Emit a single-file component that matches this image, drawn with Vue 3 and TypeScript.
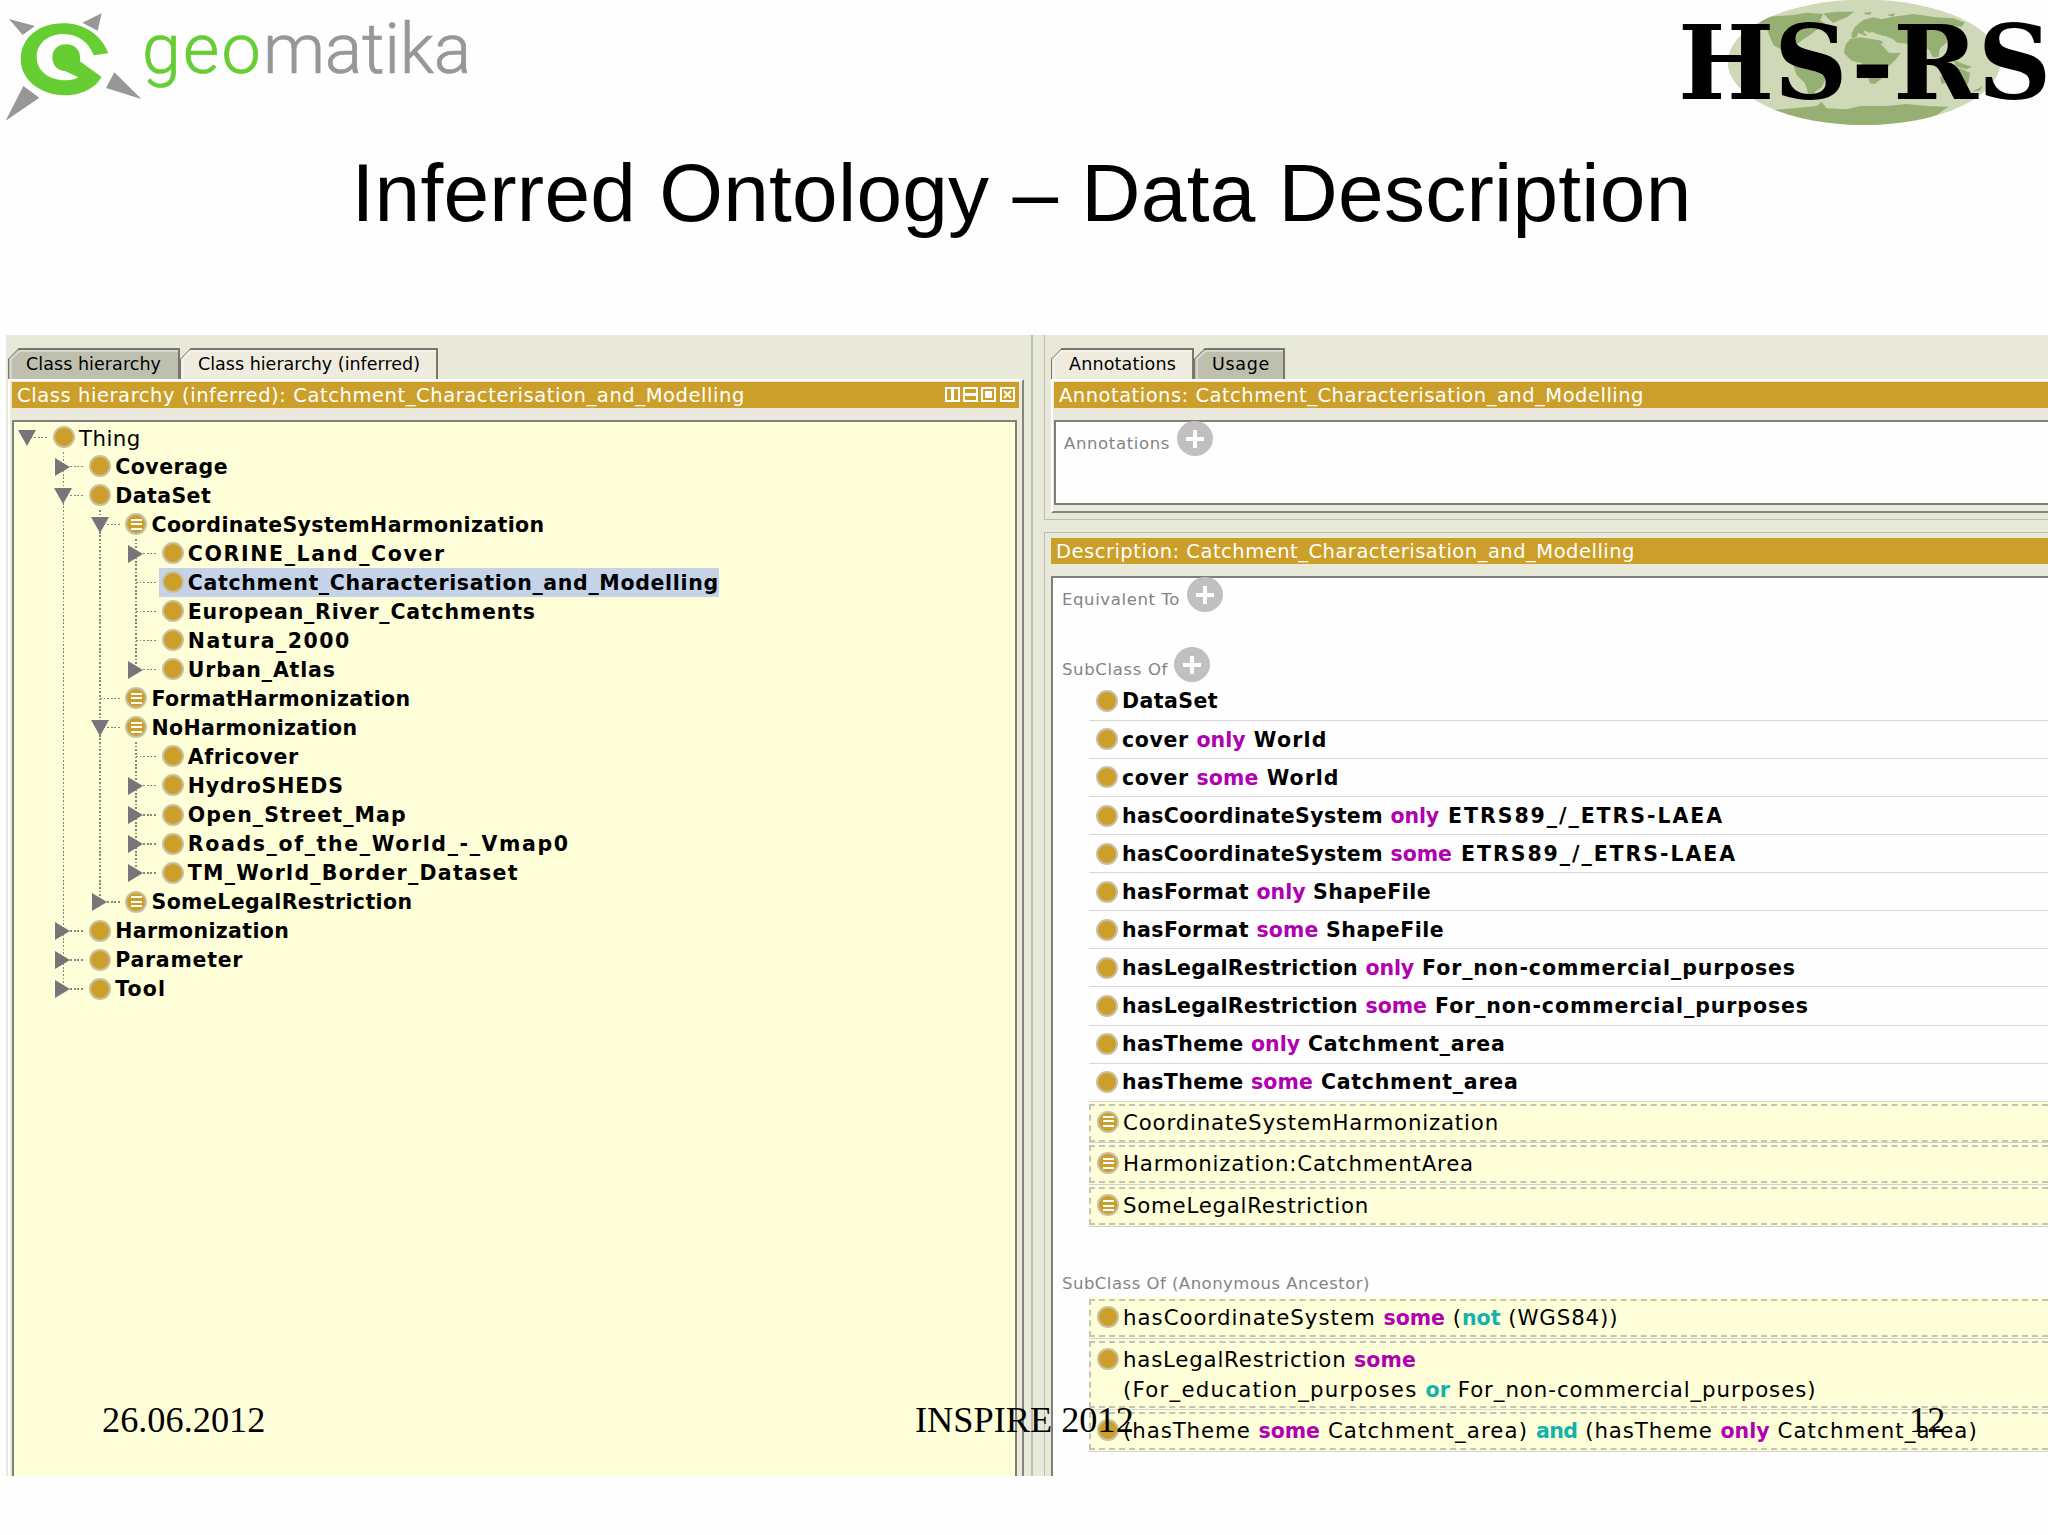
<script setup lang="ts">
import type { Directive } from 'vue'

type Kind = 'plain' | 'defined'
type Expander = 'open' | 'closed' | 'none'

interface TreeNode {
  label: string
  level: number
  kind: Kind
  expander: Expander
  width: number
  selected?: boolean
}

interface Token {
  text: string
  width: number
  tone?: 'quantifier' | 'operator'
}

interface Axiom {
  kind: Kind
  lines: Token[][]
}

interface Tab {
  label: string
  width: number
  textWidth: number
  active: boolean
}

// Spreads the letters of a text so that it takes the given width.
const vFit: Directive<HTMLElement, number> = {
  mounted(el, binding) {
    const count = (el.textContent ?? '').length
    const natural = el.getBoundingClientRect().width
    if (count > 0) el.style.letterSpacing = `${(binding.value - natural) / count}px`
  },
}

const node = (
  level: number,
  label: string,
  expander: Expander,
  width: number,
  kind: Kind = 'plain',
  selected = false,
): TreeNode => ({ level, label, expander, width, kind, selected })

const nodes: TreeNode[] = [
  node(0, 'Thing', 'open', 62),
  node(1, 'Coverage', 'closed', 113),
  node(1, 'DataSet', 'open', 96),
  node(2, 'CoordinateSystemHarmonization', 'open', 393, 'defined'),
  node(3, 'CORINE_Land_Cover', 'closed', 258),
  node(3, 'Catchment_Characterisation_and_Modelling', 'none', 531, 'plain', true),
  node(3, 'European_River_Catchments', 'none', 348),
  node(3, 'Natura_2000', 'none', 163),
  node(3, 'Urban_Atlas', 'closed', 148),
  node(2, 'FormatHarmonization', 'none', 259, 'defined'),
  node(2, 'NoHarmonization', 'open', 206, 'defined'),
  node(3, 'Africover', 'none', 111),
  node(3, 'HydroSHEDS', 'closed', 156),
  node(3, 'Open_Street_Map', 'closed', 219),
  node(3, 'Roads_of_the_World_-_Vmap0', 'closed', 382),
  node(3, 'TM_World_Border_Dataset', 'closed', 331),
  node(2, 'SomeLegalRestriction', 'closed', 261, 'defined'),
  node(1, 'Harmonization', 'closed', 174),
  node(1, 'Parameter', 'closed', 128),
  node(1, 'Tool', 'closed', 51),
]

// Vertical guide of one indent column: full height, upper half, or none.
function guide(row: number, column: number): string {
  if (column === 0) return 'guide-none'
  let continues = false
  for (let i = row + 1; i < nodes.length; i++) {
    if (nodes[i].level < column) break
    if (nodes[i].level === column) {
      continues = true
      break
    }
  }
  if (continues) return 'guide-full'
  return nodes[row].level === column ? 'guide-half' : 'guide-none'
}

// "*word*" marks a quantifier and "~word~" a boolean operator.
function parse(source: string, widths: number[]): Token[] {
  return source
    .split(/(\*[^*]+\*|~[^~]+~)/)
    .filter((part) => part.length > 0)
    .map((part, i) => {
      const width = widths[i]
      if (part.startsWith('*')) return { text: part.slice(1, -1), width, tone: 'quantifier' as const }
      if (part.startsWith('~')) return { text: part.slice(1, -1), width, tone: 'operator' as const }
      return { text: part, width }
    })
}

const axiom = (kind: Kind, ...lines: [string, number[]][]): Axiom => ({
  kind,
  lines: lines.map(([source, widths]) => parse(source, widths)),
})

const asserted: Axiom[] = [
  axiom('plain', ['DataSet', [96]]),
  axiom('plain', ['cover *only* World', [74.5, 49, 82]]),
  axiom('plain', ['cover *some* World', [74.5, 62, 81]]),
  axiom('plain', ['hasCoordinateSystem *only* ETRS89_/_ETRS-LAEA', [268.5, 48.5, 285]]),
  axiom('plain', ['hasCoordinateSystem *some* ETRS89_/_ETRS-LAEA', [268.5, 61.5, 285]]),
  axiom('plain', ['hasFormat *only* ShapeFile', [134.5, 49, 125.5]]),
  axiom('plain', ['hasFormat *some* ShapeFile', [134.5, 62, 125.5]]),
  axiom('plain', ['hasLegalRestriction *only* For_non-commercial_purposes', [243.5, 48.5, 382]]),
  axiom('plain', ['hasLegalRestriction *some* For_non-commercial_purposes', [243.5, 61.5, 382]]),
  axiom('plain', ['hasTheme *only* Catchment_area', [129, 49, 205.5]]),
  axiom('plain', ['hasTheme *some* Catchment_area', [129, 62, 205.5]]),
]

const inferred: Axiom[] = [
  axiom('defined', ['CoordinateSystemHarmonization', [376]]),
  axiom('defined', ['Harmonization:CatchmentArea', [351]]),
  axiom('defined', ['SomeLegalRestriction', [246]]),
]

const ancestors: Axiom[] = [
  axiom('plain', ['hasCoordinateSystem *some* (~not~ (WGS84))', [260.5, 61.5, 17, 38.5, 118]]),
  axiom(
    'plain',
    ['hasLegalRestriction *some*', [231, 62]],
    ['(For_education_purposes ~or~ For_non-commercial_purposes)', [302.5, 24.5, 366.5]],
  ),
  axiom('plain', [
    '(hasTheme *some* Catchment_area) ~and~ (hasTheme *only* Catchment_area)',
    [135.5, 61.5, 216, 41.5, 143, 49, 208.5],
  ]),
]

const leftTabs: Tab[] = [
  { label: 'Class hierarchy', width: 172, textWidth: 135, active: false },
  { label: 'Class hierarchy (inferred)', width: 258, textWidth: 222, active: true },
]
const rightTabs: Tab[] = [
  { label: 'Annotations', width: 143, textWidth: 107, active: true },
  { label: 'Usage', width: 91, textWidth: 58, active: false },
]
</script>

<template>
  <main class="slide">
    <header class="brands">
      <div class="geomatika">
        <svg class="compass" width="145" height="130" viewBox="0 0 435 390">
          <g fill="#979797">
            <path d="M27 57 105 78 68 105Z" />
            <path d="M305 40 247 68 293 92Z" />
            <path d="M70 258 118 293 17 362Z" />
            <path d="M343 217 318 264 424 297Z" />
          </g>
          <path
            fill="#66cd33"
            d="M325 160C303 102 250 70 190 70C112 70 62 118 62 178C62 240 122 286 195 286C245 286 290 262 304 230L240 184C244 155 228 133 198 133C172 133 157 150 157 172C157 195 172 213 195 213L235 232C225 238 215 241 200 241C150 241 110 215 110 170C110 130 145 102 190 102C235 102 268 128 281 166Z"
          />
        </svg>
        <span class="wordmark"><span v-fit="121" class="fit geo">geo</span><span v-fit="208" class="fit">matika</span></span>
      </div>
      <div class="hsrs">
        <svg class="globe" width="388" height="130" viewBox="0 0 1164 390">
          <defs>
            <clipPath id="oval"><ellipse cx="612" cy="187" rx="409" ry="188" /></clipPath>
          </defs>
          <g clip-path="url(#oval)">
            <rect width="1164" height="390" fill="#cfd9b7" />
            <g fill="#96b073">
              <path d="M295 72 320 50 400 45 440 38 490 42 480 60 500 75 470 90 450 105 430 118 415 130 400 135 380 160 400 190 385 185 365 150 340 135 325 100 318 80Z" />
              <path d="M490 40 530 35 583 35 560 52 540 60 520 68 508 60Z" />
              <path d="M400 195 440 205 470 215 498 235 485 262 465 275 458 287 445 283 435 250 410 225Z" />
              <path d="M570 118 600 112 640 118 665 122 685 150 695 160 722 158 708 178 680 205 672 230 645 252 630 250 618 215 606 190 575 182 552 160 556 135Z" />
              <path d="M575 100 585 80 610 60 640 52 665 58 700 50 760 42 830 52 880 55 915 68 905 80 880 78 870 100 858 130 840 145 835 170 818 172 808 150 790 140 775 165 755 140 735 130 712 128 695 115 660 105 635 95 615 108 595 98 590 112 575 115Z" />
              <path d="M840 232 865 212 900 205 930 218 925 250 905 262 880 245 845 252Z" />
              <path d="M880 180 905 190 935 200 920 208 890 200Z" />
              <path d="M335 330 400 325 470 318 485 305 500 325 560 328 600 318 680 318 740 312 800 318 865 320 830 345 700 390 480 390Z" />
              <path d="M612 38 635 36 630 44 615 43ZM680 45 705 40 700 50ZM935 275 970 258 960 272Z" />
            </g>
            <path d="M665 130 690 158" stroke="#cfd9b7" stroke-width="6" />
            <path d="M612 95 640 108 680 112" stroke="#cfd9b7" stroke-width="7" fill="none" />
          </g>
        </svg>
        <span v-fit="373" class="fit hsrs-text">HS-RS</span>
      </div>
    </header>

    <h1 class="title"><span v-fit="1340" class="fit">Inferred Ontology – Data Description</span></h1>

    <section class="workspace">
      <div class="left-pane">
        <div class="tabs">
          <div v-for="tab in leftTabs" :key="tab.label" class="tab" :style="{ width: tab.width + 'px' }">
            <svg class="tab-shape" :width="tab.width" height="31">
              <path :d="`M.5 31V11L10.5 1H${tab.width - 1}V31Z`" :fill="tab.active ? '#efebdf' : '#bebfae'" />
              <path :d="`M3 31V11L12 3H${tab.width - 2}`" fill="none" stroke="#fff" stroke-opacity=".75" />
              <path :d="`M.5 31V11L10.5 .8`" fill="none" stroke="#777770" />
              <path :d="`M10 1H${tab.width - 1}V31`" fill="none" stroke="#777770" stroke-width="2" />
            </svg>
            <span v-fit="tab.textWidth" class="fit tab-label">{{ tab.label }}</span>
          </div>
        </div>
        <div class="tab-panel hierarchy">
          <div class="titlebar">
            <span v-fit="728" class="fit">Class hierarchy (inferred): Catchment_Characterisation_and_Modelling</span>
            <svg class="controls" width="70" height="15" fill="none" stroke="#fff" stroke-width="2">
              <path d="M1 1H14V14H1ZM7.5 1V14" /><path d="M6 2H9V13H6Z" fill="#fff" stroke="none" />
              <path d="M19 1H32V14H19ZM19 7.5H32" /><path d="M19 6H32V9H19Z" fill="#fff" stroke="none" />
              <path d="M37 1H50V14H37Z" /><path d="M40 4H47V11H40Z" fill="#fff" stroke="none" />
              <path d="M56 1H69V14H56Z" /><path d="M59 4 66 11M66 4 59 11" />
            </svg>
          </div>
          <div class="tree">
            <div v-for="(item, row) in nodes" :key="item.label" class="tree-row">
              <span v-for="column in item.level + 1" :key="column" class="indent" :class="guide(row, column - 1)">
                <template v-if="column === item.level + 1">
                  <i class="stub"></i>
                  <svg v-if="item.expander !== 'none'" class="expander" width="18" height="18" fill="#77757a">
                    <path v-if="item.expander === 'open'" d="M0 1H18L9 17Z" />
                    <path v-else d="M1 0 16 9 1 18Z" />
                  </svg>
                </template>
              </span>
              <span class="node" :class="{ selected: item.selected }">
                <i class="dot" :class="item.kind"><i v-if="item.kind === 'defined'" class="bars"></i></i>
                <span v-fit="item.width" class="fit node-label" :class="item.level > 0 ? 'bold' : 'regular'">{{ item.label }}</span>
              </span>
            </div>
          </div>
        </div>
      </div>

      <div class="right-pane">
        <div class="split annotations-split">
          <div class="tabs">
            <div v-for="tab in rightTabs" :key="tab.label" class="tab" :style="{ width: tab.width + 'px' }">
              <svg class="tab-shape" :width="tab.width" height="31">
                <path :d="`M.5 31V11L10.5 1H${tab.width - 1}V31Z`" :fill="tab.active ? '#efebdf' : '#bebfae'" />
                <path :d="`M3 31V11L12 3H${tab.width - 2}`" fill="none" stroke="#fff" stroke-opacity=".75" />
                <path :d="`M.5 31V11L10.5 .8`" fill="none" stroke="#777770" />
                <path :d="`M10 1H${tab.width - 1}V31`" fill="none" stroke="#777770" stroke-width="2" />
              </svg>
              <span v-fit="tab.textWidth" class="fit tab-label">{{ tab.label }}</span>
            </div>
          </div>
          <div class="tab-panel annotations">
            <div class="titlebar">
              <span v-fit="585" class="fit">Annotations: Catchment_Characterisation_and_Modelling</span>
            </div>
            <div class="box annotations-box">
              <div class="section-head">
                <span v-fit="106" class="fit">Annotations</span><i class="plus"></i>
              </div>
            </div>
          </div>
        </div>
        <div class="split description-split">
          <div class="titlebar">
            <span v-fit="579" class="fit">Description: Catchment_Characterisation_and_Modelling</span>
          </div>
          <div class="box description-box">
            <div class="section-head equivalent">
              <span v-fit="118" class="fit">Equivalent To</span><i class="plus"></i>
            </div>
            <div class="section-head subclass">
              <span v-fit="106" class="fit">SubClass Of</span><i class="plus"></i>
            </div>
            <div class="rows">
              <div v-for="(item, i) in asserted" :key="i" class="asserted bold">
                <i class="dot"></i>
                <span v-for="(line, k) in item.lines" :key="k" class="line"><span v-for="(token, t) in line" :key="t" v-fit="token.width" class="fit" :class="token.tone">{{ token.text }}</span></span>
              </div>
              <div v-for="(item, i) in inferred" :key="i" class="inferred">
                <div class="dashed">
                  <i class="dot" :class="item.kind"><i class="bars"></i></i>
                  <span v-for="(line, k) in item.lines" :key="k" v-fit="line[0].width" class="fit regular">{{ line[0].text }}</span>
                </div>
              </div>
            </div>
            <div class="section-head anonymous">
              <span v-fit="308" class="fit">SubClass Of (Anonymous Ancestor)</span>
            </div>
            <div class="rows">
              <div v-for="(item, i) in ancestors" :key="i" class="inferred" :class="{ tall: item.lines.length > 1 }">
                <div class="dashed">
                  <i class="dot"></i>
                  <div class="lines">
                    <div v-for="(line, k) in item.lines" :key="k" class="line regular"><span v-for="(token, t) in line" :key="t" v-fit="token.width" class="fit" :class="token.tone">{{ token.text }}</span></div>
                  </div>
                </div>
              </div>
            </div>
          </div>
        </div>
      </div>
    </section>

    <span class="note note-date">26.06.2012</span>
    <span class="note note-event">INSPIRE 2012</span>
    <span class="note note-page">12</span>
  </main>
</template>

<style>
body {
  background: #fefefe;
  overflow: hidden;
}
</style>

<style scoped>
* {
  box-sizing: border-box;
}
.slide {
  position: relative;
  width: 2048px;
  height: 1535px;
  overflow: hidden;
  background: #fefefe;
  color: #000;
  font-family: 'DejaVu Sans', sans-serif;
  font-size: 20.5px;
}
.fit {
  display: inline-block;
  white-space: pre;
}
.line {
  white-space: nowrap;
}
.bold {
  font-weight: bold;
}
.regular {
  font-size: 21.3px;
}

/* Brand row and title */
.brands {
  display: flex;
  justify-content: space-between;
  height: 130px;
}
.geomatika {
  display: flex;
}
.compass {
  margin-right: -3px;
}
.wordmark {
  display: flex;
  padding-top: 7px;
  font: 300 70px/84px Roboto, sans-serif;
  color: #979797;
  -webkit-text-stroke: 0.7px currentColor;
}
.geo {
  color: #66cd33;
}
.hsrs {
  position: relative;
  width: 388px;
}
.globe {
  display: block;
}
.hsrs-text {
  position: absolute;
  left: 18px;
  top: 0;
  font: bold 102px/127px 'DejaVu Serif', serif;
}
.title {
  margin: 0;
  height: 205px;
  padding-left: 351.5px;
  font: 400 82px/126px 'Liberation Sans', sans-serif;
}

/* Application frame */
.workspace {
  display: flex;
  height: 1141px;
  margin-left: 6px;
  overflow: hidden;
  background: #e8e9d9;
}
.left-pane {
  width: 1027px;
  flex: none;
  padding: 13px 7px 0 2px;
  border-right: 2px solid #bcbcb6;
}
.tabs {
  display: flex;
  height: 31px;
}
.tab {
  position: relative;
  flex: none;
  padding-left: 18px;
  line-height: 32px;
  font-size: 17.5px;
}
.tab-shape {
  position: absolute;
  left: 0;
  top: 0;
}
.tab-label {
  position: relative;
}
.tab-panel {
  border-top: 2px solid #fff;
  border-left: 2px solid #fff;
  background: #ebe9db;
}
.hierarchy {
  height: 1100px;
  padding: 1px 3px 0 2px;
  border-right: 2px solid #85857f;
}
.titlebar {
  display: flex;
  justify-content: space-between;
  align-items: flex-start;
  height: 26px;
  padding: 0 4px 0 5px;
  background: #cb9f2a;
  color: #fff;
  font-size: 19.5px;
  line-height: 27px;
}
.controls {
  margin-top: 5px;
}
.tree {
  height: 1090px;
  margin: 12px 2px 0 0;
  padding-top: 0.8px;
  border: 2px solid #7f7e78;
  background: #fefed9;
}
.tree-row {
  display: flex;
  height: 29.03px;
  margin-left: -5px;
  line-height: 29px;
}
.indent {
  position: relative;
  flex: none;
  width: 36.3px;
}
.guide-full::before,
.guide-half::before {
  content: '';
  position: absolute;
  left: 17.5px;
  top: 0;
  width: 1.5px;
  height: 100%;
  background: repeating-linear-gradient(to bottom, #85857a 0 1.8px, transparent 1.8px 3.629px);
}
.guide-half::before {
  height: 50%;
}
.stub {
  position: absolute;
  left: 18px;
  top: 14px;
  width: 21px;
  height: 1.5px;
  background: repeating-linear-gradient(to right, #85857a 0 1.8px, transparent 1.8px 3.6px);
}
.expander {
  position: absolute;
  left: 9px;
  top: 6px;
}
.node {
  display: flex;
  align-items: center;
  height: 29px;
  margin-left: 5px;
  padding-left: 2.6px;
}
.node-label {
  padding-top: 2px;
}
.selected {
  background: #c5d3e8;
}
.dot {
  position: relative;
  flex: none;
  width: 22px;
  height: 22px;
  margin-right: 4px;
  border: 2px solid #c9c0a2;
  border-radius: 50%;
  background: #cb9f2a;
}
.bars {
  position: absolute;
  left: 3.5px;
  top: 3.5px;
  width: 11px;
  height: 11px;
  background: linear-gradient(#fff 0 2px, transparent 2px 4.5px, #fff 4.5px 6.5px, transparent 6.5px 9px, #fff 9px 11px);
}

/* Right column */
.right-pane {
  flex: 1;
  padding-left: 11px;
}
.split {
  padding-left: 6px;
  border: 1.5px solid #bcbcb0;
  border-right: 0;
}
.annotations-split {
  height: 185px;
  padding-top: 13px;
  border-top: 0;
}
.annotations {
  height: 134px;
  padding: 1px 0 0 1px;
  border-bottom: 2px solid #85857f;
}
.box {
  margin-top: 12px;
  border: 2px solid #7f7e78;
  border-right: 0;
  background: #fefefe;
}
.annotations-box {
  height: 85px;
  padding-left: 8px;
}
.description-split {
  height: 960px;
  margin-top: 11.5px;
  padding-top: 5.5px;
}
.description-box {
  height: 930px;
  padding-left: 9px;
}
.section-head {
  display: flex;
  height: 35px;
  font-size: 16.5px;
  line-height: 46px;
  color: #858387;
}
.plus {
  width: 36px;
  height: 35px;
  margin-left: 7px;
  border-radius: 50%;
  background:
    linear-gradient(#fff 0 0) center / 18px 4px no-repeat,
    linear-gradient(#fff 0 0) center / 4px 18px no-repeat,
    #c1bfc1;
}
.subclass {
  margin-top: 35.3px;
}
.subclass .plus {
  margin-left: 5.5px;
}
.annotations-box .section-head,
.equivalent {
  margin-top: -1px;
}
.rows {
  margin-left: 27px;
}
.asserted {
  display: flex;
  align-items: center;
  height: 38.1px;
  padding-left: 6.5px;
  line-height: 39px;
  border-bottom: 1.9px solid #d7d5d7;
}
.asserted .line {
  padding: 1.5px 0 0 0.5px;
}
.subclass + .rows {
  margin-top: 0.4px;
}
.inferred {
  height: 41.7px;
  padding-top: 2px;
  border-bottom: 1.9px solid #d2d0d2;
  background: #fefed9;
}
.dashed {
  display: flex;
  align-items: flex-start;
  height: 38px;
  padding: 5px 0 0 6px;
  border: 2px dashed #c4c4b4;
  border-right: 0;
  line-height: 24px;
}
.lines {
  line-height: 29px;
  margin-top: -3px;
}
.tall {
  height: 71px;
}
.tall .dashed {
  height: 67px;
}
.anonymous {
  height: 35px;
  margin-top: 35.5px;
  line-height: 44px;
}
.quantifier {
  font-size: 20.5px;
  font-weight: bold;
  color: #b000b0;
}
.operator {
  font-size: 20.5px;
  font-weight: bold;
  color: #12b3ad;
}

/* Slide footer, laid over the application */
.note {
  position: absolute;
  top: 1399px;
  font: 36.3px/42px 'Liberation Serif', serif;
}
.note-date {
  left: 102px;
}
.note-event {
  left: 915px;
}
.note-page {
  left: 1909px;
}
</style>
